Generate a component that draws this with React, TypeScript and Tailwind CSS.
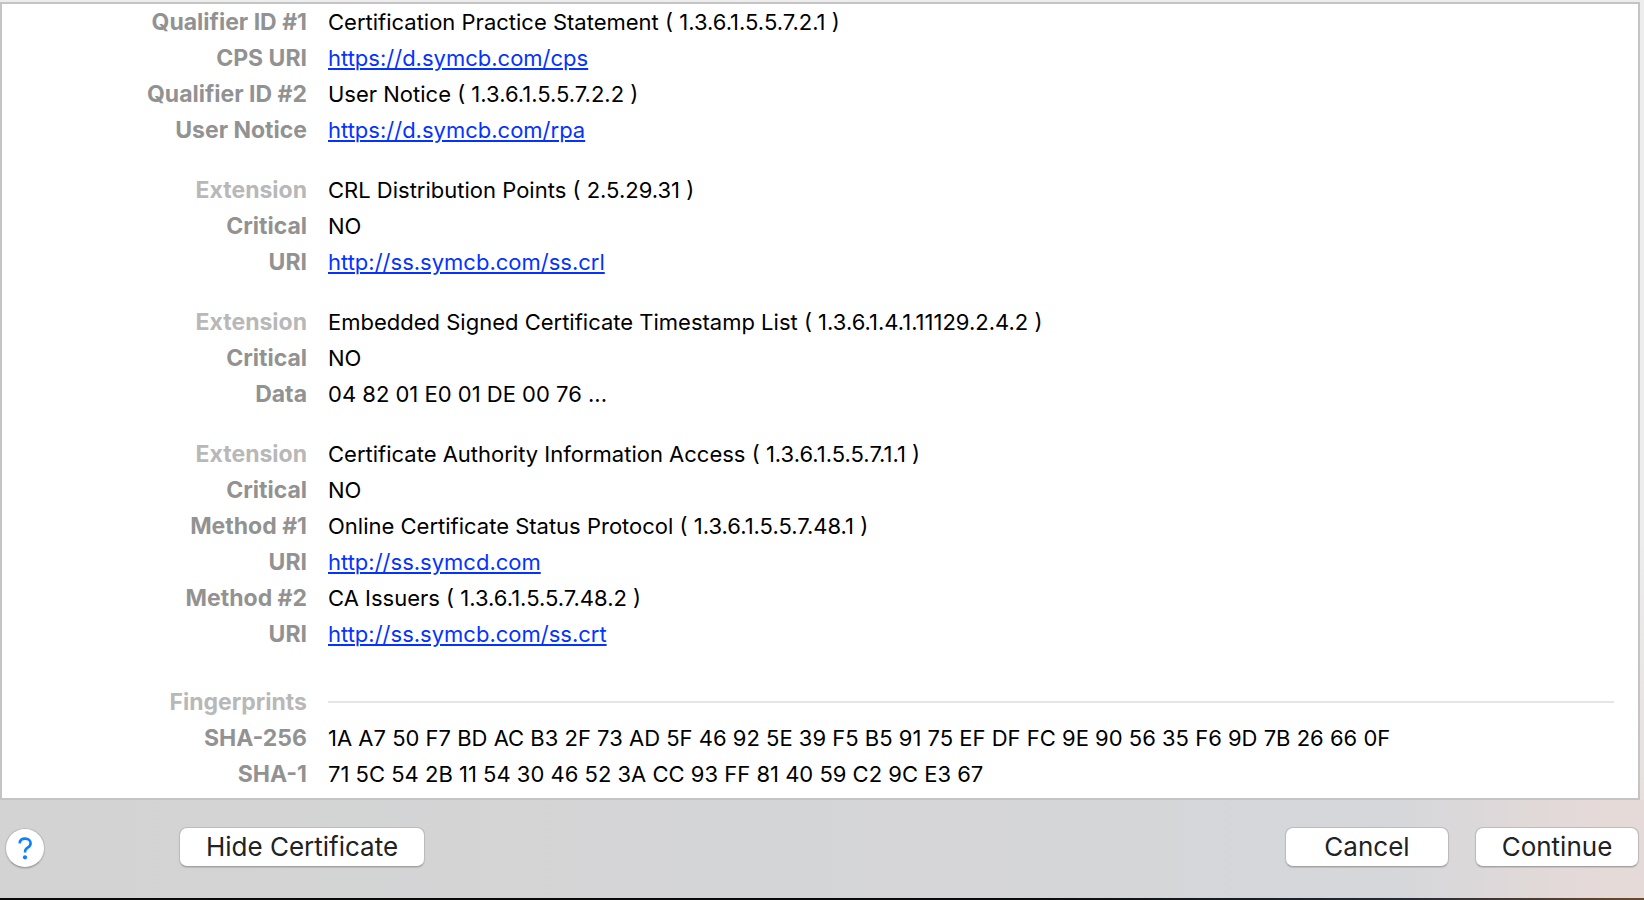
import React from "react";

type Row = { label: string; value?: string; href?: string; heading?: boolean };

const groups: Row[][] = [
  [
    { label: "Qualifier ID #1", value: "Certification Practice Statement ( 1.3.6.1.5.5.7.2.1 )" },
    { label: "CPS URI", href: "https://d.symcb.com/cps" },
    { label: "Qualifier ID #2", value: "User Notice ( 1.3.6.1.5.5.7.2.2 )" },
    { label: "User Notice", href: "https://d.symcb.com/rpa" },
  ],
  [
    { label: "Extension", value: "CRL Distribution Points ( 2.5.29.31 )", heading: true },
    { label: "Critical", value: "NO" },
    { label: "URI", href: "http://ss.symcb.com/ss.crl" },
  ],
  [
    { label: "Extension", value: "Embedded Signed Certificate Timestamp List ( 1.3.6.1.4.1.11129.2.4.2 )", heading: true },
    { label: "Critical", value: "NO" },
    { label: "Data", value: "04 82 01 E0 01 DE 00 76 ..." },
  ],
  [
    { label: "Extension", value: "Certificate Authority Information Access ( 1.3.6.1.5.5.7.1.1 )", heading: true },
    { label: "Critical", value: "NO" },
    { label: "Method #1", value: "Online Certificate Status Protocol ( 1.3.6.1.5.5.7.48.1 )" },
    { label: "URI", href: "http://ss.symcd.com" },
    { label: "Method #2", value: "CA Issuers ( 1.3.6.1.5.5.7.48.2 )" },
    { label: "URI", href: "http://ss.symcb.com/ss.crt" },
  ],
];

const fingerprints: Row[] = [
  { label: "Fingerprints", heading: true },
  {
    label: "SHA-256",
    value:
      "1A A7 50 F7 BD AC B3 2F 73 AD 5F 46 92 5E 39 F5 B5 91 75 EF DF FC 9E 90 56 35 F6 9D 7B 26 66 0F",
  },
  { label: "SHA-1", value: "71 5C 54 2B 11 54 30 46 52 3A CC 93 FF 81 40 59 C2 9C E3 67" },
];

function Section({ rows }: { rows: Row[] }) {
  return (
    <dl>
      {rows.map((row, i) => (
        <div key={i} className="flex gap-[21px] leading-9">
          <dt
            className={`w-[305px] shrink-0 text-right text-[23px] font-bold ${
              row.heading ? "text-[#b8b8b8]" : "text-[#929292]"
            }`}
          >
            {row.label}
          </dt>
          <dd className="flex min-w-0 flex-1 items-center text-black">
            {row.href ? (
              <a href={row.href} className="text-[#0433ff] underline decoration-2 underline-offset-2">
                {row.href}
              </a>
            ) : row.value ? (
              <span>{row.value}</span>
            ) : (
              <span className="mr-6 h-0.5 flex-1 bg-[#e5e5e5]" />
            )}
          </dd>
        </div>
      ))}
    </dl>
  );
}

function PushButton({ children, className }: { children: React.ReactNode; className: string }) {
  return (
    <button
      type="button"
      className={`h-10 rounded-lg border border-[#bdbbbb] border-b-[#a3a1a1] bg-white text-[26px] leading-9 text-[#222] shadow-[0_1px_1px_rgba(0,0,0,0.12)] ${className}`}
    >
      {children}
    </button>
  );
}

export default function App() {
  return (
    <div className="flex min-h-screen flex-col bg-linear-to-b from-[#ededed] from-60% to-[#e3dad8] font-['Inter',sans-serif]">
      <main className="mt-0.5 mr-1 border-2 border-[#c4c4c4] bg-white pb-1.5 text-[22px]">
        <div className="flex flex-col gap-6">
          {groups.map((rows, i) => (
            <Section key={i} rows={rows} />
          ))}
        </div>
        <div className="mt-8">
          <Section rows={fingerprints} />
        </div>
      </main>
      <footer className="flex flex-1 items-start bg-linear-to-r from-[#d3d3d3] via-[#d6d7da] via-85% to-[#e5dad8] to-97% pt-[27px] pr-[5px] pl-[5px]">
        <button
          type="button"
          aria-label="Help"
          className="mt-px flex size-10 items-center justify-center rounded-full border border-[#bdbbbb] border-b-[#a3a1a1] bg-white text-[#0a80ff] shadow-[0_1px_1px_rgba(0,0,0,0.12)]"
        >
          <svg viewBox="0 0 38 38" className="size-[38px]" fill="none">
            <path
              d="M13.600 14.300C13.800 11.400 15.900 9.600 19.200 9.600C22.400 9.600 24.600 11.500 24.600 14.200C24.600 16.200 23.600 17.500 21.700 18.600C19.800 19.700 19.100 20.600 19.100 22.300V23.600"
              stroke="currentColor"
              strokeWidth="2.600"
            />
            <circle cx="19" cy="28.300" r="2.100" fill="currentColor" />
          </svg>
        </button>
        <PushButton className="ml-[134px] w-[246px]">Hide Certificate</PushButton>
        <div className="ml-auto flex gap-[26px]">
          <PushButton className="w-[164px]">Cancel</PushButton>
          <PushButton className="w-[164px]">Continue</PushButton>
        </div>
      </footer>
      <div className="h-0.5 bg-linear-to-r from-[#080908] from-60% via-[#252a35] via-85% to-[#6b4a2c]" />
    </div>
  );
}
